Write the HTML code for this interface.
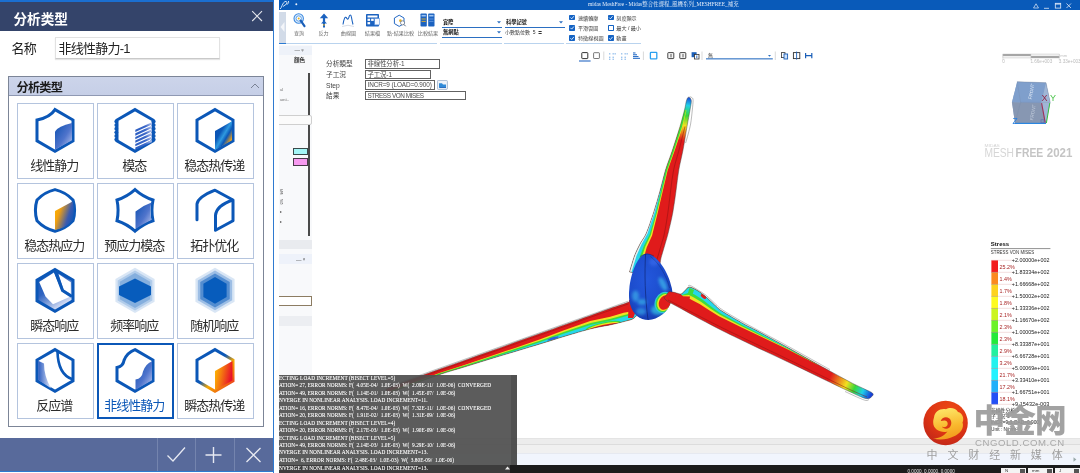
<!DOCTYPE html>
<html lang="zh"><head><meta charset="utf-8"><title>分析类型</title>
<style>
*{box-sizing:border-box;margin:0;padding:0}
html,body{width:1080px;height:473px;overflow:hidden;background:#fff}
body{position:relative;opacity:.9999;font-family:"Liberation Sans","Noto Sans CJK SC",sans-serif;color:#333}
.abs{position:absolute}
/* ---------- left dialog ---------- */
#dlg{position:absolute;left:0;top:0;width:274px;height:473px;background:#fff;border-right:1.5px solid #2f7ad0}
#dlg .top{position:absolute;left:0;top:0;width:274px;height:2px;background:#1b6fd0}
#dlg .title{position:absolute;left:0;top:1.5px;width:272.5px;height:29px;background:#34446a;color:#fff;font-weight:bold;font-size:13.6px;line-height:35px;padding-left:13.5px;letter-spacing:0}
#dlg .name{position:absolute;left:11.5px;top:39.5px;font-size:13px;line-height:17px;color:#222;letter-spacing:-.8px}
#dlg .inp{position:absolute;left:55px;top:37px;width:165px;height:22px;border:1px solid #e2e2e2;border-bottom-color:#c9c9c9;box-shadow:0 1px 1px rgba(0,0,0,.10);font-size:13px;line-height:22px;padding-left:2.5px;color:#222;background:#fff;letter-spacing:-.75px}
#grp{position:absolute;left:8px;top:76px;width:256px;height:351px;border:1px solid #7c8597;background:#fff}
#grp .hd{position:absolute;left:0;top:0;width:254px;height:18.6px;background:linear-gradient(#ccd4ea,#c6cfe7);border-bottom:1px solid #8f99b3;font-size:12.2px;font-weight:bold;line-height:22px;padding-left:7.5px;color:#1a1a1a;letter-spacing:-.8px}
.tile{position:absolute;width:77px;height:76px;border:1px solid #b4c4de;background:#fff;text-align:center}
.tile svg{position:absolute;left:-1px;top:-1px;display:block}
.tile span{position:absolute;left:-7.5px;right:-6px;top:52.5px;font-size:13px;line-height:18px;color:#2c2c2c;white-space:nowrap;letter-spacing:-1px;text-indent:-1px}
.tile.sel{border:2px solid #0b57b7}
.tile.sel svg{left:-2px;top:-2px}
.tile.sel span{color:#0b57b7;top:51.5px;left:-8.5px;right:-7px}
#foot{position:absolute;left:0;top:438px;width:272.5px;height:33px;background:#586a9b}
#foot i{position:absolute;top:0;width:1px;height:33px;background:#7484ae}
#dlg .bot{position:absolute;left:0;top:470.5px;width:274px;height:1.5px;background:#2f7ad0}
/* ---------- app ---------- */
#app{position:absolute;left:279px;top:0;width:801px;height:473px;background:#fff;overflow:hidden}
#tb{position:absolute;left:0;top:0;width:801px;height:10.1px;background:#095ab9}
.t5{font-size:5px;line-height:6px;white-space:nowrap}
.rl{position:absolute;top:29.5px;font-size:5.1px;line-height:6px;color:#6a6a6a;white-space:nowrap;transform:translateX(-50%);font-family:"Liberation Sans","Noto Sans CJK TC",sans-serif}
.seg{position:absolute;top:43px;height:1.3px;background:#b9d3ee}
.dd{position:absolute;height:1.2px;background:#2b6fc2}
.ck{position:absolute;width:5.6px;height:5.6px;background:#1463c4;border-radius:.8px}
.ck.off{background:#fff;border:1px solid #1463c4}
.ckl{position:absolute;font-size:5.1px;line-height:6px;color:#3a3a3a;white-space:nowrap;font-family:"Liberation Sans","Noto Sans CJK TC",sans-serif}
.fl{position:absolute;left:47px;font-size:6.7px;line-height:9px;color:#444;white-space:nowrap;font-family:"Liberation Sans","Noto Sans CJK TC",sans-serif}
.fb{position:absolute;left:86px;height:9.5px;border:1px solid #626262;font-size:6.4px;line-height:7.6px;padding-left:1.5px;color:#4a4a4a;white-space:nowrap;font-family:"Liberation Sans","Noto Sans CJK TC",sans-serif;letter-spacing:-.1px}
#side{position:absolute;left:0;top:44.5px;width:33px;height:331px;background:#f8f9fb}
#log{position:absolute;left:0;top:375px;width:238px;height:89.5px;background:rgba(80,80,80,.93);overflow:hidden}
#log div,.logl{font-family:"Liberation Serif","Noto Serif CJK SC",serif;font-size:5.3px;line-height:7.45px;color:#fff;white-space:nowrap;letter-spacing:.05px;text-shadow:0 0 .4px rgba(255,255,255,.45)}
.lg{position:absolute;font-size:4.6px;line-height:6px;white-space:nowrap;color:#222}
.lp{position:absolute;font-size:5px;line-height:6px;white-space:nowrap;color:#a02020}
</style></head>
<body>

<svg width="0" height="0" style="position:absolute"><defs>
<linearGradient id="gb" x1="0" y1="0" x2="1" y2="1"><stop offset="0" stop-color="#0b4fb0"/><stop offset=".55" stop-color="#4f74cc"/><stop offset="1" stop-color="#c4cdf0"/></linearGradient>
<linearGradient id="gb2" x1="0" y1="1" x2="1" y2="0"><stop offset="0" stop-color="#2a5cc0"/><stop offset=".6" stop-color="#3a66c8"/><stop offset="1" stop-color="#cfd6f4"/></linearGradient>
<linearGradient id="gheat" x1="0" y1="0" x2="1" y2="1"><stop offset="0" stop-color="#0b4fb0"/><stop offset=".35" stop-color="#0b57b7"/><stop offset=".5" stop-color="#2f9ae0"/><stop offset=".62" stop-color="#0b57b7"/><stop offset=".8" stop-color="#e8a020"/><stop offset="1" stop-color="#ffc000"/></linearGradient>
<linearGradient id="gorange" x1="0" y1="0.2" x2="1" y2="0.7"><stop offset="0" stop-color="#ffb400"/><stop offset=".25" stop-color="#f0a010"/><stop offset=".7" stop-color="#3a5ab0"/><stop offset="1" stop-color="#0b57b7"/></linearGradient>
<linearGradient id="gshade" x1="0" y1="0" x2="0.6" y2="1"><stop offset="0" stop-color="#0b57b7"/><stop offset=".5" stop-color="#2f63c0"/><stop offset="1" stop-color="#e6eafa"/></linearGradient>
<linearGradient id="gshade2" x1="0" y1="0" x2="1" y2="0"><stop offset="0" stop-color="#2a5cc0"/><stop offset="1" stop-color="#dfe5f8"/></linearGradient>
<linearGradient id="ghot" x1="0" y1="0" x2="1" y2="0.3"><stop offset="0" stop-color="#ffc400"/><stop offset=".45" stop-color="#f47a10"/><stop offset="1" stop-color="#e8102a"/></linearGradient>
<linearGradient id="ghs" gradientUnits="userSpaceOnUse" x1="20" y1="10" x2="58" y2="46"><stop offset="0" stop-color="#0b57b7"/><stop offset=".42" stop-color="#0b57b7"/><stop offset=".6" stop-color="#f5a800"/><stop offset=".8" stop-color="#f07010"/><stop offset="1" stop-color="#e8102a"/></linearGradient>
</defs></svg>


<div id="dlg">
 <div class="top"></div>
 <div class="title">分析类型</div>
 <svg class="abs" style="left:250px;top:9px" width="14" height="14" viewBox="0 0 14 14"><path d="M2.2,2.2L12,12M12,2.2L2.2,12" stroke="#e4e6ec" stroke-width="1.1" fill="none"/></svg>
 <div class="name">名称</div>
 <div class="inp">非线性静力-1</div>
 <div id="grp"><div class="hd">分析类型</div>
  <svg class="abs" style="left:241px;top:5px" width="10" height="8" viewBox="0 0 10 8"><path d="M1,6L5,2L9,6" stroke="#7a8294" stroke-width="1" fill="none"/></svg>
 </div>
 <div class="tile" style="left:17px;top:103px"><svg width="77" height="52" viewBox="0 0 77 52"><path d="M38.00,6.60 Q33.00,14.40 19.99,17.00 L19.99,37.80 L38.00,48.20 L56.01,37.80 L56.01,17.00 Z" fill="#fff" stroke="#0b57b7" stroke-width="3.0" stroke-linejoin="miter"/><path d="M38.00,46.70 L38.00,28.40 Q41.00,23.40 55.01,20.00 L55.01,37.30 Z" fill="url(#gb)"/></svg><span>线性静力</span></div>
<div class="tile" style="left:97px;top:103px"><svg width="77" height="52" viewBox="0 0 77 52"><polygon points="38.00,6.60 56.01,17.00 56.01,37.80 38.00,48.20 19.99,37.80 19.99,17.00" fill="#fff" stroke="#0b57b7" stroke-width="3.0"/><circle cx="19.29" cy="18.50" r="1.9" fill="#0b57b7"/><circle cx="19.29" cy="22.10" r="1.9" fill="#0b57b7"/><circle cx="19.29" cy="25.70" r="1.9" fill="#0b57b7"/><circle cx="19.29" cy="29.30" r="1.9" fill="#0b57b7"/><circle cx="19.29" cy="32.90" r="1.9" fill="#0b57b7"/><circle cx="19.29" cy="36.50" r="1.9" fill="#0b57b7"/><circle cx="56.71" cy="18.50" r="1.9" fill="#0b57b7"/><circle cx="56.71" cy="22.10" r="1.9" fill="#0b57b7"/><circle cx="56.71" cy="25.70" r="1.9" fill="#0b57b7"/><circle cx="56.71" cy="29.30" r="1.9" fill="#0b57b7"/><circle cx="56.71" cy="32.90" r="1.9" fill="#0b57b7"/><circle cx="56.71" cy="36.50" r="1.9" fill="#0b57b7"/><polygon points="38.30,26.80 54.81,19.20 54.81,21.50 38.30,29.10" fill="url(#gb2)"/><polygon points="38.30,30.35 54.81,22.75 54.81,25.05 38.30,32.65" fill="url(#gb2)"/><polygon points="38.30,33.90 54.81,26.30 54.81,28.60 38.30,36.20" fill="url(#gb2)"/><polygon points="38.30,37.45 54.81,29.85 54.81,32.15 38.30,39.75" fill="url(#gb2)"/><polygon points="38.30,41.00 54.81,33.40 54.81,35.70 38.30,43.30" fill="url(#gb2)"/><polygon points="38.30,44.55 54.81,36.95 54.81,39.25 38.30,46.85" fill="url(#gb2)"/></svg><span>模态</span></div>
<div class="tile" style="left:177px;top:103px"><svg width="77" height="52" viewBox="0 0 77 52"><polygon points="38.00,6.60 56.01,17.00 56.01,37.80 38.00,48.20 19.99,37.80 19.99,17.00" fill="#fff" stroke="#0b57b7" stroke-width="3.0"/><polygon points="38.00,27.90 55.01,18.20 55.01,37.20 38.00,46.90" fill="url(#gheat)"/></svg><span>稳态热传递</span></div>
<div class="tile" style="left:17px;top:183px"><svg width="77" height="52" viewBox="0 0 77 52"><path d="M38.00,6.60 Q48.61,9.03 56.01,17.00 Q59.21,27.40 56.01,37.80 Q48.61,45.77 38.00,48.20 Q27.39,45.77 19.99,37.80 Q16.79,27.40 19.99,17.00 Q27.39,9.03 38.00,6.60 Z" fill="#fff" stroke="#0b57b7" stroke-width="3.0" stroke-linejoin="round"/><path d="M38.00,27.90 L55.51,18.50 Q58.01,27.40 55.51,37.30 Q48.00,45.70 38.00,46.90 Z" fill="url(#gorange)"/></svg><span>稳态热应力</span></div>
<div class="tile" style="left:97px;top:183px"><svg width="77" height="52" viewBox="0 0 77 52"><path d="M38.00,6.60 Q45.91,13.71 56.01,17.00 Q53.81,27.40 56.01,37.80 Q45.91,41.09 38.00,48.20 Q30.09,41.09 19.99,37.80 Q22.19,27.40 19.99,17.00 Q30.09,13.71 38.00,6.60 Z" fill="#fff" stroke="#0b57b7" stroke-width="3.0" stroke-linejoin="miter"/><path d="M38.50,28.40 Q46.00,22.40 54.51,19.50 Q52.01,27.40 54.51,36.80 Q46.00,41.20 38.50,45.70 Z" fill="url(#gb)"/></svg><span>预应力模态</span></div>
<div class="tile" style="left:177px;top:183px"><svg width="77" height="52" viewBox="0 0 77 52"><path d="M19.99,36.80 L19.99,21.00 Q20.99,14.00 38.00,7.20 L56.01,17.00 L56.01,37.80 L38.50,47.20" fill="none" stroke="#0b57b7" stroke-width="3.0" stroke-linejoin="round" stroke-linecap="round"/><path d="M38.50,47.70 L38.50,32.40 Q39.50,22.40 56.01,17.00" fill="none" stroke="#0b57b7" stroke-width="3.0" stroke-linecap="butt"/></svg><span>拓扑优化</span></div>
<div class="tile" style="left:17px;top:263px"><svg width="77" height="52" viewBox="0 0 77 52"><polygon points="38.00,6.60 56.01,17.00 56.01,37.80 38.00,48.20 19.99,37.80 19.99,17.00" fill="url(#gshade)" stroke="#0b57b7" stroke-width="3.0"/><polygon points="37.00,9.60 45.00,28.40 52.51,33.90 36.00,41.20 28.50,33.40 22.19,19.00" fill="#fff"/><polygon points="41.50,11.10 53.81,19.20 53.81,30.90 46.50,26.40" fill="#fff"/><path d="M38.00,7.60 L45.50,27.40 L55.01,33.40" fill="none" stroke="#0b57b7" stroke-width="3.0"/></svg><span>瞬态响应</span></div>
<div class="tile" style="left:97px;top:263px"><svg width="77" height="52" viewBox="0 0 77 52"><polygon points="38.00,4.80 57.57,16.10 57.57,38.70 38.00,50.00 18.43,38.70 18.43,16.10" fill="#1565c0" opacity="0.16"/><polygon points="38.00,7.40 55.32,17.40 55.32,37.40 38.00,47.40 20.68,37.40 20.68,17.40" fill="#1565c0" opacity="0.2"/><polygon points="38.00,9.90 53.16,18.65 53.16,36.15 38.00,44.90 22.84,36.15 22.84,18.65" fill="#1565c0" opacity="0.28"/><polygon points="38.00,15.40 54.00,23.40 54.00,31.90 38.00,39.90 22.00,31.90 22.00,23.40" fill="#075cbc"/></svg><span>频率响应</span></div>
<div class="tile" style="left:177px;top:263px"><svg width="77" height="52" viewBox="0 0 77 52"><polygon points="38.00,4.80 57.57,16.10 57.57,38.70 38.00,50.00 18.43,38.70 18.43,16.10" fill="#1565c0" opacity="0.16"/><polygon points="38.00,7.60 55.15,17.50 55.15,37.30 38.00,47.20 20.85,37.30 20.85,17.50" fill="#1565c0" opacity="0.3"/><polygon points="38.00,10.40 52.72,18.90 52.72,35.90 38.00,44.40 23.28,35.90 23.28,18.90" fill="#1565c0" opacity="0.55"/><polygon points="38.00,14.00 49.60,20.70 49.60,34.10 38.00,40.80 26.40,34.10 26.40,20.70" fill="#075cbc"/></svg><span>随机响应</span></div>
<div class="tile" style="left:17px;top:343px"><svg width="77" height="52" viewBox="0 0 77 52"><polygon points="38.00,6.60 56.01,17.00 56.01,37.80 38.00,48.20 19.99,37.80 19.99,17.00" fill="#fff" stroke="#0b57b7" stroke-width="3.0"/><path d="M21.19,17.80 L27.00,20.50 Q27.00,33.40 34.00,45.20 L21.19,37.00 L21.19,18.00 Z" fill="url(#gshade2)"/><path d="M40.50,8.60 Q41.00,31.40 55.51,36.30" fill="none" stroke="#0b57b7" stroke-width="2.6"/></svg><span>反应谱</span></div>
<div class="tile sel" style="left:97px;top:343px"><svg width="77" height="52" viewBox="0 0 77 52"><path d="M38.00,6.60 L56.01,17.00 L56.01,37.80 L38.00,48.20 L19.99,37.80 L19.99,24.40 Q25.99,23.40 27.00,17.40 Q30.00,9.60 38.00,6.60 Z" fill="#fff" stroke="#0b57b7" stroke-width="3.0" stroke-linejoin="miter"/><path d="M38.50,46.70 L38.50,36.40 Q45.00,35.40 46.00,28.40 Q49.00,20.40 55.01,18.50 L55.01,37.20 Z" fill="url(#gb)"/></svg><span>非线性静力</span></div>
<div class="tile" style="left:177px;top:343px"><svg width="77" height="52" viewBox="0 0 77 52"><polygon points="38.00,6.60 56.01,17.00 56.01,37.80 38.00,48.20 19.99,37.80 19.99,17.00" fill="#fff" stroke="url(#ghs)" stroke-width="3.0"/><polygon points="38.00,27.90 55.51,18.00 55.51,37.40 38.00,47.20" fill="url(#ghot)"/></svg><span>瞬态热传递</span></div>

 <div id="foot"><i style="left:157px"></i><i style="left:195px"></i><i style="left:233.5px"></i>
  <svg class="abs" style="left:157px;top:0" width="116" height="33" viewBox="0 0 116 33">
   <path d="M10.5,17.5L16,23L28,9.5" stroke="#e6e9f2" stroke-width="1.3" fill="none"/>
   <path d="M48.5,17H64.5M56.5,9V25" stroke="#e6e9f2" stroke-width="1.4" fill="none"/>
   <path d="M89.5,10L103.5,24M103.5,10L89.5,24" stroke="#e6e9f2" stroke-width="1.3" fill="none"/>
  </svg>
 </div>
 <div class="bot"></div>
</div>

<div id="app">
<div class="abs" style="left:0;top:438px;width:801px;height:7px;background:#ececec;border-top:1px solid #e4e4e4;border-bottom:1px solid #dcdcdc"></div>
<div class="abs" style="left:0;top:445px;width:801px;height:8px;background:#f0f0f0"></div>
<div class="abs" style="left:0;top:453px;width:801px;height:11.5px;background:#f1f5fd;border-top:1px solid #e6e9f0"></div>
<div id="tb"></div>
<svg class="abs" style="left:0;top:0" width="30" height="11" viewBox="0 0 30 11"><path d="M1,9C3,8 3,3 6,1.5M4,6.5L7.5,4M6,1.5C8,1 8.5,2.5 7.5,4C9,4.5 10,3 9.5,1" stroke="#cfe0f5" stroke-width="1" fill="none"/><circle cx="17.3" cy="4.2" r="1" fill="#e8f0fb"/></svg>
<div class="abs t5" style="left:309px;top:1.2px;color:#e8effa;font-family:&quot;Liberation Serif&quot;,&quot;Noto Serif CJK SC&quot;,serif;font-size:5.45px">midas MeshFree - Midas整合性課程_風機系列_MESHFREE_補充</div>
<svg class="abs" style="left:752px;top:1px" width="46" height="9" viewBox="0 0 46 9"><path d="M2.5,7L5,2.8L7.5,7Z" stroke="#dfe9f8" stroke-width=".7" fill="none"/><path d="M13,7.3H18" stroke="#dfe9f8" stroke-width=".8"/><rect x="24.3" y="2.3" width="5.4" height="4.8" stroke="#dfe9f8" stroke-width=".8" fill="none"/><path d="M24.3,3H29.7" stroke="#dfe9f8" stroke-width="1"/><path d="M35.5,2.5L40,7M40,2.5L35.5,7" stroke="#dfe9f8" stroke-width=".8"/></svg>
<div class="abs" style="left:0;top:12px;width:6.5px;height:31px;background:#d2dbe8"></div>
<svg class="abs" style="left:0;top:21px" width="7" height="12" viewBox="0 0 7 12"><path d="M5.5,1L1.5,6L5.5,11Z" fill="#f4f6fa"/></svg>
<div class="abs" style="left:0;top:42.8px;width:6.5px;height:1.7px;background:#2b7ad2"></div>
<div class="seg" style="left:6.5px;width:151.5px"></div>
<div class="seg" style="left:161.0px;width:62.0px"></div>
<div class="seg" style="left:224.5px;width:60.0px"></div>
<div class="seg" style="left:287.0px;width:74.5px"></div>
<svg class="abs" style="left:0;top:0" width="180" height="44" viewBox="0 0 180 44"><g transform="translate(20.5,20.5)"><circle cx="-.8" cy="-2" r="4.7" fill="#e4f0fc" stroke="#3d8ae0" stroke-width="1.1"/><circle cx="-.8" cy="-2" r="2.7" fill="#fff" stroke="#5a9ee8" stroke-width="1"/><circle cx="-.8" cy="-2" r="1" fill="#e6b020"/><path d="M1.2,.2L5,5.6" stroke="#1b5fb8" stroke-width="2.2" stroke-linecap="round"/></g><g transform="translate(45.0,20.5)"><path d="M0,-7L4.2,-2.2H1.1V2H-1.1V-2.2H-4.2Z" fill="#1b62c0"/><path d="M0,0L3,3H1V7H-1V3H-3Z" fill="#1b62c0"/><circle cx="0" cy="4.4" r=".8" fill="#e6b020"/></g><g transform="translate(69.0,20.5)"><path d="M-5,4C-4,-2 -3,-4 -1.8,-3C-.8,-2 -.5,.5 .8,-3C1.8,-6.5 3,-6 3.5,-3C4,0 4.5,2 5,4" stroke="#1b62c0" stroke-width="1.1" fill="none"/><path d="M-6,6Q0,3.5 6,6" stroke="#d8dde6" stroke-width="1" fill="none"/></g><g transform="translate(93.5,20.5)"><rect x="-6.5" y="-6.5" width="13" height="12.5" rx=".8" fill="#1b62c0"/><rect x="-5" y="-5" width="10" height="2" fill="#fff"/><rect x="-5" y="-1.8" width="2.6" height="2.2" fill="#fff"/><rect x="-1.4" y="-1.8" width="2.6" height="2.2" fill="#fff"/><rect x="-5" y="1.6" width="2.6" height="2.2" fill="#fff"/><rect x="2.2" y="-2" width="4.6" height="6.4" fill="#f4f8ff" stroke="#5a92dc" stroke-width=".6"/></g><g transform="translate(121.0,20.8) scale(.8)"><path d="M-1,-7L5,-3.5V3.5L-1,7L-7,3.5V-3.5Z" fill="#fff" stroke="#1b62c0" stroke-width="1.2"/><circle cx=".5" cy="-.2" r="1.6" fill="#e6b020"/><circle cx="3.2" cy="2.6" r="2.6" fill="#fff" stroke="#4a5a70" stroke-width=".8"/><path d="M5,4.6L7,6.8" stroke="#4a5a70" stroke-width="1.1"/></g><g transform="translate(148.5,20.5)"><rect x="-7" y="-7" width="6.3" height="13" rx=".8" fill="#1b62c0"/><rect x=".7" y="-7" width="6.3" height="13" rx=".8" fill="#1b62c0"/><rect x="-6" y="-5.6" width="4.3" height="1.6" fill="#9cc2f0"/><rect x="1.7" y="-5.6" width="4.3" height="1.6" fill="#9cc2f0"/><rect x="-6" y="-2" width="4.3" height="1" fill="#d0a83a"/><rect x="-6" y=".4" width="4.3" height="1" fill="#d0a83a"/><rect x="1.7" y="-2" width="4.3" height="1" fill="#5a92dc"/><rect x="1.7" y=".4" width="4.3" height="1" fill="#5a92dc"/></g></svg>
<div class="rl" style="left:20.0px">查詢</div>
<div class="rl" style="left:44.5px">反力</div>
<div class="rl" style="left:69.5px">曲線圖</div>
<div class="rl" style="left:93.5px">結果檔</div>
<div class="rl" style="left:121.5px">點-結果比較</div>
<div class="rl" style="left:149.0px">比較結果</div>
<div class="abs t5" style="left:164.0px;top:19.0px;color:#111;font-weight:bold;font-family:&quot;Liberation Sans&quot;,&quot;Noto Sans CJK TC&quot;,sans-serif;font-size:5.2px">實際</div><div class="dd" style="left:163.0px;top:27.2px;width:60.0px"></div><svg class="abs" style="left:217.5px;top:21.0px" width="4" height="3" viewBox="0 0 4 3"><path d="M0,.3H4L2,2.6Z" fill="#2b6fc2"/></svg>
<div class="abs t5" style="left:164.0px;top:29.2px;color:#111;font-weight:bold;font-family:&quot;Liberation Sans&quot;,&quot;Noto Sans CJK TC&quot;,sans-serif;font-size:5.2px">無網點</div><div class="dd" style="left:163.0px;top:36.6px;width:60.0px"></div><svg class="abs" style="left:217.5px;top:31.2px" width="4" height="3" viewBox="0 0 4 3"><path d="M0,.3H4L2,2.6Z" fill="#2b6fc2"/></svg>
<div class="abs t5" style="left:227.0px;top:19.0px;color:#111;font-weight:bold;font-family:&quot;Liberation Sans&quot;,&quot;Noto Sans CJK TC&quot;,sans-serif;font-size:5.2px">科學記號</div><div class="dd" style="left:226.0px;top:27.2px;width:59.5px"></div><svg class="abs" style="left:280.0px;top:21.0px" width="4" height="3" viewBox="0 0 4 3"><path d="M0,.3H4L2,2.6Z" fill="#2b6fc2"/></svg>
<div class="abs t5" style="left:226.0px;top:29.4px;color:#333;font-family:&quot;Liberation Sans&quot;,&quot;Noto Sans CJK TC&quot;,sans-serif;font-size:5px">小數點位數&nbsp; 5 &nbsp;≑</div>
<div class="ck" style="left:290.3px;top:14.7px"></div><div class="ckl" style="left:299.0px;top:14.5px">連續輪廓</div>
<div class="ck" style="left:290.3px;top:25.0px"></div><div class="ckl" style="left:299.0px;top:24.8px">平滑雲圖</div>
<div class="ck" style="left:290.3px;top:35.4px"></div><div class="ckl" style="left:299.0px;top:35.2px">特徵線視圖</div>
<div class="ck" style="left:329.0px;top:14.7px"></div><div class="ckl" style="left:337.3px;top:14.5px">刻度顯示</div>
<div class="ck off" style="left:329.0px;top:25.0px"></div><div class="ckl" style="left:337.3px;top:24.8px">最大 / 最小</div>
<div class="ck" style="left:329.0px;top:35.4px"></div><div class="ckl" style="left:337.3px;top:35.2px">動畫</div>
<svg class="abs" style="left:0;top:0;pointer-events:none" width="400" height="44" viewBox="0 0 400 44"><path d="M291.4,17.5l1.3,1.3l2.2,-2.6" stroke="#fff" stroke-width=".8" fill="none"/><path d="M291.4,27.8l1.3,1.3l2.2,-2.6" stroke="#fff" stroke-width=".8" fill="none"/><path d="M291.4,38.2l1.3,1.3l2.2,-2.6" stroke="#fff" stroke-width=".8" fill="none"/><path d="M330.1,17.5l1.3,1.3l2.2,-2.6" stroke="#fff" stroke-width=".8" fill="none"/><path d="M330.1,38.2l1.3,1.3l2.2,-2.6" stroke="#fff" stroke-width=".8" fill="none"/></svg>
<svg class="abs" style="left:0;top:0" width="801" height="70" viewBox="0 0 801 70"><rect x="302.8" y="52.6" width="6.0" height="6.0" fill="#fff" stroke="#333" stroke-width="1" rx=".6"/><rect x="300.0" y="60.4" width="11.6" height="1.2" fill="#3a76c8"/><rect x="314.6" y="52.7" width="5.8" height="5.8" fill="#fff" stroke="#555" stroke-width="0.8" rx=".6"/><path d="M324.8,51.5V60" stroke="#c8c8c8" stroke-width=".7"/><rect x="330.0" y="53.1" width="1.4" height="1.4" fill="#9cc4ee"/><rect x="333.5" y="53.1" width="1.4" height="1.4" fill="#9cc4ee"/><rect x="335.5" y="53.1" width="1.4" height="1.4" fill="#9cc4ee"/><rect x="330.0" y="56.6" width="1.4" height="1.4" fill="#9cc4ee"/><rect x="333.5" y="56.6" width="1.4" height="1.4" fill="#9cc4ee"/><rect x="333.5" y="58.6" width="1.4" height="1.4" fill="#9cc4ee"/><rect x="330.0" y="58.6" width="1.4" height="1.4" fill="#9cc4ee"/><rect x="342.0" y="53.1" width="1.4" height="1.4" fill="#9cc4ee"/><rect x="345.5" y="53.1" width="1.4" height="1.4" fill="#9cc4ee"/><rect x="347.5" y="53.1" width="1.4" height="1.4" fill="#9cc4ee"/><rect x="342.0" y="56.6" width="1.4" height="1.4" fill="#9cc4ee"/><rect x="345.5" y="56.6" width="1.4" height="1.4" fill="#9cc4ee"/><rect x="345.5" y="58.6" width="1.4" height="1.4" fill="#9cc4ee"/><rect x="342.0" y="58.6" width="1.4" height="1.4" fill="#9cc4ee"/><rect x="354.0" y="52.4" width="2.5" height="1.1" fill="#2f72c8"/><rect x="354.0" y="54.2" width="4.0" height="1.1" fill="#2f72c8"/><rect x="354.0" y="56.0" width="5.5" height="1.1" fill="#2f72c8"/><rect x="354.0" y="57.8" width="7.0" height="1.1" fill="#2f72c8"/><path d="M364.4,51.5V60" stroke="#c8c8c8" stroke-width=".7"/><rect x="371.4" y="52.4" width="6.4" height="6.4" fill="#fff" stroke="#2aa0f0" stroke-width="1.3" rx=".6"/><rect x="388.8" y="52.6" width="6.0" height="6.0" fill="#f4f4f4" stroke="#333" stroke-width="0.9" rx=".6"/><path d="M392.0,54v3.4" stroke="#333" stroke-width=".8"/><rect x="400.8" y="52.6" width="6.0" height="6.0" fill="#f4f4f4" stroke="#333" stroke-width="0.9" rx=".6"/><path d="M404.0,54v3.4" stroke="#333" stroke-width=".8"/><rect x="412.6" y="52.2" width="5" height="5" fill="#1b5fb8"/><rect x="415.4" y="54.4" width="4.6" height="4.6" fill="#fff" stroke="#333" stroke-width=".8"/><path d="M417.8,55.5v2.6" stroke="#1b5fb8" stroke-width=".9"/><path d="M423.0,51.5V60" stroke="#c8c8c8" stroke-width=".7"/><rect x="427.0" y="58.3" width="66.8" height="1.1" fill="#2b6fc2"/><path d="M489.0,55h3l-1.5,1.8Z" fill="#2b6fc2"/><path d="M496.3,51.5V60" stroke="#c8c8c8" stroke-width=".7"/><rect x="502.4" y="52.6" width="3.6" height="5" fill="#fff" stroke="#333" stroke-width=".8"/><rect x="505.0" y="54" width="3.6" height="5" fill="#cfe2fa" stroke="#1b5fb8" stroke-width=".9"/><rect x="514.4" y="52.6" width="6.4" height="6" fill="#fff" stroke="#333" stroke-width=".9"/><path d="M517.6,51.6v8" stroke="#1b5fb8" stroke-width=".9"/><path d="M526.4,55.6h6.4M526.6,53v5.2M532.8,53v5.2" stroke="#1b5fb8" stroke-width="1.2"/></svg>
<div class="abs t5" style="left:429.0px;top:52.3px;color:#333;font-family:&quot;Liberation Sans&quot;,&quot;Noto Sans CJK TC&quot;,sans-serif;font-size:5px">無</div>
<div class="fl" style="top:59.2px">分析類型</div>
<div class="fl" style="top:70.2px">子工況</div>
<div class="fl" style="top:80.5px">Step</div>
<div class="fl" style="top:91.2px">結果</div>
<div class="fb" style="top:59.0px;width:74.5px">非線性分析-1</div>
<div class="fb" style="top:69.6px;width:65.5px">子工況-1</div>
<div class="fb" style="top:80.2px;width:70.0px">INCR=9 (LOAD=0.900)</div>
<div class="fb" style="top:90.8px;width:101.0px"><span style="letter-spacing:-.42px">STRESS VON MISES</span></div>
<svg class="abs" style="left:158.0px;top:80px" width="11" height="10" viewBox="0 0 11 10"><rect x=".4" y=".4" width="10" height="9" rx="1" fill="#eef3fa" stroke="#8aa0c0" stroke-width=".7"/><path d="M2,3.2h3l1,1.2h3v3.4h-7z" fill="#2f8ad8"/><path d="M2.5,7.5h6.5" stroke="#1b5fb8" stroke-width=".8"/></svg>
<div id="side"><div class="abs" style="left:0;top:1.5px;width:33px;height:8.5px;background:#eef2f9"></div><div class="abs t5" style="left:15.5px;top:2.7px;color:#555;font-size:5.5px">— <span style="font-size:4.6px;position:relative;top:-.6px">ᵠ</span></div><div class="abs t5" style="left:15px;top:12.7px;color:#333;font-weight:bold;font-size:5.6px;font-family:&quot;Liberation Sans&quot;,&quot;Noto Sans CJK TC&quot;,sans-serif">顏色</div><div class="abs" style="left:29.2px;top:28.5px;width:1.5px;height:163px;background:#4a4a4a"></div><div class="abs t5" style="left:1px;top:42.0px;color:#777;font-size:4.6px;font-family:&quot;Liberation Serif&quot;,serif">al</div><div class="abs t5" style="left:1px;top:52.8px;color:#777;font-size:4.6px;font-family:&quot;Liberation Serif&quot;,serif">ami..</div><div class="abs" style="left:-3px;top:70.5px;width:35.5px;height:10px;border:1px solid #cfcfcf;border-radius:0 2px 2px 0;background:#fbfbfb"></div><div class="abs" style="left:14.3px;top:103.5px;width:15px;height:7.4px;background:#a4f6f6;border:1px solid #3a4a4a"></div><div class="abs" style="left:14.3px;top:113.9px;width:15px;height:7.4px;background:#f79af0;border:1px solid #4a3a4a"></div><div class="abs t5" style="left:1px;top:144.5px;color:#555;font-size:4.4px;width:3px;overflow:hidden;font-family:&quot;Liberation Sans&quot;,&quot;Noto Sans CJK TC&quot;,sans-serif">變</div><div class="abs t5" style="left:1px;top:154.5px;color:#555;font-size:4.4px;width:3px;overflow:hidden;font-family:&quot;Liberation Sans&quot;,&quot;Noto Sans CJK TC&quot;,sans-serif">度</div><div class="abs t5" style="left:1px;top:164.5px;color:#555;font-size:4.4px;width:3px;overflow:hidden;font-family:&quot;Liberation Sans&quot;,&quot;Noto Sans CJK TC&quot;,sans-serif">▸</div><div class="abs t5" style="left:1px;top:174.5px;color:#555;font-size:4.4px;width:3px;overflow:hidden;font-family:&quot;Liberation Sans&quot;,&quot;Noto Sans CJK TC&quot;,sans-serif">▸</div><div class="abs" style="left:0;top:195.0px;width:33px;height:9.5px;background:#e9ebef"></div><div class="abs" style="left:0;top:209.9px;width:33px;height:10px;background:#eef2fa"></div><div class="abs t5" style="left:17px;top:212.0px;color:#555;font-size:5.5px">— <span style="font-size:4.6px;position:relative;top:-.6px">ᵠ</span></div><div class="abs" style="left:-3px;top:251.1px;width:36px;height:10px;border:1px solid #8c7c62;background:#fff"></div><div class="abs" style="left:0;top:271.5px;width:33px;height:10px;background:#eceef2"></div></div>
<svg class="abs" style="left:0;top:0" width="801" height="473" viewBox="279 0 801 473"><defs><filter id="bl" x="-5%" y="-5%" width="110%" height="110%"><feGaussianBlur stdDeviation=".75"/></filter><filter id="bl2" x="-20%" y="-20%" width="140%" height="140%"><feGaussianBlur stdDeviation="1.6"/></filter><linearGradient id="gTop" gradientUnits="userSpaceOnUse" x1="650" y1="262" x2="689" y2="97"><stop offset="0" stop-color="#e01b1b"/><stop offset="0.74" stop-color="#e01b1b"/><stop offset="0.83" stop-color="#f2e020"/><stop offset="0.89" stop-color="#38d838"/><stop offset="0.95" stop-color="#20d0e8"/><stop offset="1" stop-color="#1840d8"/></linearGradient><linearGradient id="gRight" gradientUnits="userSpaceOnUse" x1="670" y1="296" x2="871" y2="395"><stop offset="0" stop-color="#e01b1b"/><stop offset="0.8" stop-color="#e01b1b"/><stop offset="0.88" stop-color="#f2e020"/><stop offset="0.92" stop-color="#38d838"/><stop offset="0.96" stop-color="#20d0e8"/><stop offset="1" stop-color="#1840d8"/></linearGradient><linearGradient id="gLeft" gradientUnits="userSpaceOnUse" x1="632" y1="308" x2="380" y2="396"><stop offset="0" stop-color="#e01b1b"/><stop offset="1" stop-color="#e01b1b"/></linearGradient><radialGradient id="gHub" cx=".42" cy=".4" r=".7"><stop offset="0" stop-color="#2357dc"/><stop offset=".6" stop-color="#1c4ccc"/><stop offset="1" stop-color="#1536a6"/></radialGradient><clipPath id="cTop"><path d="M629.5,272.0C629.9,270.8 630.7,267.8 631.6,265.0C632.5,262.2 633.4,258.5 634.8,255.0C636.2,251.5 638.1,247.7 640.0,244.0C641.9,240.3 644.1,238.3 646.4,233.0C648.7,227.7 651.5,219.0 653.8,212.0C656.1,205.0 658.0,198.0 660.0,191.0C662.0,184.0 663.4,176.8 665.5,170.0C667.6,163.2 670.1,157.2 672.5,150.0C674.9,142.8 678.0,133.2 680.0,126.5C682.0,119.8 683.4,114.3 684.5,110.0C685.6,105.7 685.8,102.6 686.5,100.5C687.2,98.4 687.8,97.2 688.6,97.2C689.4,97.2 691.1,98.4 691.3,100.5C691.5,102.6 690.7,105.7 690.0,110.0C689.3,114.3 688.2,119.8 687.0,126.5C685.8,133.2 684.4,142.8 683.0,150.0C681.6,157.2 680.0,163.2 678.8,170.0C677.6,176.8 677.0,184.0 676.0,191.0C675.0,198.0 674.2,205.0 672.9,212.0C671.6,219.0 669.6,227.3 668.2,233.0C666.8,238.7 665.7,241.8 664.5,246.0C663.3,250.2 661.9,254.7 661.0,258.0C660.1,261.3 660.8,263.2 659.0,266.0C657.2,268.8 651.5,273.5 650.0,275.0Z"/></clipPath><clipPath id="cRight"><path d="M669.0,291.5C670.0,291.7 673.0,292.1 675.0,292.5C677.0,292.9 679.3,294.3 681.0,294.0C682.7,293.7 683.6,291.7 685.0,290.5C686.4,289.3 687.3,287.0 689.3,287.0C691.3,287.0 694.3,288.7 697.0,290.3C699.7,291.9 702.8,294.2 705.7,296.6C708.6,299.0 711.9,302.5 714.6,304.9C717.4,307.3 717.3,308.0 722.2,311.2C727.1,314.4 738.3,320.8 743.8,323.9C749.3,327.0 748.0,325.9 755.2,329.8C762.4,333.7 776.3,341.2 786.8,347.0C797.3,352.8 807.5,358.7 818.0,364.5C828.5,370.3 842.3,377.9 850.0,382.0C857.7,386.1 860.2,386.9 864.0,388.8C867.8,390.7 871.3,391.9 872.6,393.2C873.9,394.5 872.9,395.6 871.8,396.5C870.7,397.4 869.6,399.4 866.0,398.6C862.4,397.8 858.0,395.5 850.0,391.8C842.0,388.1 828.5,381.6 818.0,376.5C807.5,371.4 797.5,366.5 787.0,361.5C776.5,356.5 765.7,351.6 755.0,346.5C744.3,341.4 732.2,335.6 723.0,331.0C713.8,326.4 707.2,322.8 700.0,319.0C692.8,315.2 685.3,310.9 680.0,308.0C674.7,305.1 670.7,303.2 668.0,301.5C665.3,299.8 664.7,298.6 664.0,298.0Z"/></clipPath><clipPath id="cLeft"><path d="M636.0,297.5C635.0,298.2 634.3,299.8 630.0,301.6C625.7,303.5 616.7,306.2 610.0,308.6C603.3,311.0 597.5,313.1 590.0,315.8C582.5,318.5 573.1,321.8 565.0,324.7C556.9,327.6 549.7,330.1 541.5,333.0C533.3,335.9 524.4,339.0 516.0,342.0C507.6,345.0 499.5,348.0 491.0,351.0C482.5,354.0 473.5,357.2 465.0,360.2C456.5,363.2 448.3,366.0 440.0,369.0C431.7,372.0 423.0,375.1 415.0,378.0C407.0,380.9 396.8,384.6 392.0,386.5C387.2,388.4 386.0,388.7 386.0,389.5C386.0,390.3 387.2,392.5 392.0,391.5C396.8,390.5 407.0,386.4 415.0,383.5C423.0,380.6 431.7,377.2 440.0,374.4C448.3,371.6 456.5,369.4 465.0,366.8C473.5,364.2 482.5,361.3 491.0,358.7C499.5,356.1 507.6,353.7 516.0,351.2C524.4,348.7 533.3,346.0 541.5,343.5C549.7,341.0 556.6,338.7 565.0,336.2C573.4,333.7 584.2,330.4 592.0,328.5C599.8,326.6 606.3,325.8 612.0,324.5C617.7,323.2 622.4,322.0 626.0,321.0C629.6,320.0 631.2,320.0 633.5,318.5C635.8,317.0 638.9,313.1 640.0,312.0Z"/></clipPath></defs><path d="M636.0,297.5C635.0,298.2 634.3,299.8 630.0,301.6C625.7,303.5 616.7,306.2 610.0,308.6C603.3,311.0 597.5,313.1 590.0,315.8C582.5,318.5 573.1,321.8 565.0,324.7C556.9,327.6 549.7,330.1 541.5,333.0C533.3,335.9 524.4,339.0 516.0,342.0C507.6,345.0 499.5,348.0 491.0,351.0C482.5,354.0 473.5,357.2 465.0,360.2C456.5,363.2 448.3,366.0 440.0,369.0C431.7,372.0 423.0,375.1 415.0,378.0C407.0,380.9 396.8,384.6 392.0,386.5C387.2,388.4 386.0,388.7 386.0,389.5C386.0,390.3 387.2,392.5 392.0,391.5C396.8,390.5 407.0,386.4 415.0,383.5C423.0,380.6 431.7,377.2 440.0,374.4C448.3,371.6 456.5,369.4 465.0,366.8C473.5,364.2 482.5,361.3 491.0,358.7C499.5,356.1 507.6,353.7 516.0,351.2C524.4,348.7 533.3,346.0 541.5,343.5C549.7,341.0 556.6,338.7 565.0,336.2C573.4,333.7 584.2,330.4 592.0,328.5C599.8,326.6 606.3,325.8 612.0,324.5C617.7,323.2 622.4,322.0 626.0,321.0C629.6,320.0 631.2,320.0 633.5,318.5C635.8,317.0 638.9,313.1 640.0,312.0Z" fill="url(#gLeft)"/><g clip-path="url(#cLeft)"><g filter="url(#bl)"><path d="M640.0,312.0L633.5,318.5L626.0,321.0L612.0,324.5L592.0,328.5L565.0,336.2L541.5,343.5L516.0,351.2L491.0,358.7L465.0,366.8L440.0,374.4L415.0,383.5L392.0,391.5L391.6,390.4L414.5,382.2L439.5,372.9L464.4,364.9L490.2,356.2L515.0,347.9L540.2,339.3L563.3,330.4L590.2,321.1L610.3,316.7L623.7,312.8L629.2,311.8L638.6,310.6Z" fill="#f0e222"/><path d="M640.0,312.0L633.5,318.5L626.0,321.0L612.0,324.5L592.0,328.5L565.0,336.2L541.5,343.5L516.0,351.2L491.0,358.7L465.0,366.8L440.0,374.4L415.0,383.5L392.0,391.5L391.7,390.7L414.7,382.5L439.6,373.3L464.6,365.4L490.4,356.9L515.3,348.8L540.5,340.4L563.7,331.9L590.6,323.0L610.7,318.7L624.3,314.9L630.3,313.5L639.0,311.0Z" fill="#3edc3c"/><path d="M640.0,312.0L633.5,318.5L626.0,321.0L612.0,324.5L592.0,328.5L565.0,336.2L541.5,343.5L516.0,351.2L491.0,358.7L465.0,366.8L440.0,374.4L415.0,383.5L392.0,391.5L392.0,391.5L415.0,383.5L440.0,374.4L465.0,366.8L490.9,358.3L515.7,350.2L541.0,341.8L564.2,333.4L591.1,324.7L611.1,320.4L624.8,316.6L631.2,315.0L639.3,311.3Z" fill="#25d6ea"/><ellipse cx="603" cy="326.2" rx="18" ry="3.6" transform="rotate(-13 603 326.2)" fill="#3edc3c"/><ellipse cx="603" cy="326.6" rx="16.5" ry="2.8" transform="rotate(-13 603 326.6)" fill="#f0e222"/><ellipse cx="603" cy="327" rx="15" ry="2.1" transform="rotate(-13 603 327)" fill="#e01b1b"/><ellipse cx="553" cy="338.4" rx="6" ry="1.1" transform="rotate(-17 553 338.4)" fill="#2a62e0"/></g><path d="M630.0,303.4C623.3,305.7 604.8,312.2 590.0,317.4C575.2,322.6 558.0,328.8 541.5,334.6C525.0,340.5 507.9,346.5 491.0,352.5C474.1,358.5 456.5,364.5 440.0,370.4C423.5,376.3 400.0,384.9 392.0,387.8" fill="none" stroke="#8c1212" stroke-width=".7" opacity=".7"/></g><path d="M636.0,297.5C635.0,298.2 634.3,299.8 630.0,301.6C625.7,303.5 616.7,306.2 610.0,308.6C603.3,311.0 597.5,313.1 590.0,315.8C582.5,318.5 573.1,321.8 565.0,324.7C556.9,327.6 549.7,330.1 541.5,333.0C533.3,335.9 524.4,339.0 516.0,342.0C507.6,345.0 499.5,348.0 491.0,351.0C482.5,354.0 473.5,357.2 465.0,360.2C456.5,363.2 448.3,366.0 440.0,369.0C431.7,372.0 423.0,375.1 415.0,378.0C407.0,380.9 396.8,384.6 392.0,386.5C387.2,388.4 386.0,388.7 386.0,389.5C386.0,390.3 387.2,392.5 392.0,391.5C396.8,390.5 407.0,386.4 415.0,383.5C423.0,380.6 431.7,377.2 440.0,374.4C448.3,371.6 456.5,369.4 465.0,366.8C473.5,364.2 482.5,361.3 491.0,358.7C499.5,356.1 507.6,353.7 516.0,351.2C524.4,348.7 533.3,346.0 541.5,343.5C549.7,341.0 556.6,338.7 565.0,336.2C573.4,333.7 584.2,330.4 592.0,328.5C599.8,326.6 606.3,325.8 612.0,324.5C617.7,323.2 622.4,322.0 626.0,321.0C629.6,320.0 631.2,320.0 633.5,318.5C635.8,317.0 638.9,313.1 640.0,312.0Z" fill="none" stroke="#3c3c3c" stroke-width=".55" opacity=".8"/><path d="M628.0,301.2C621.7,303.5 604.4,309.8 590.0,314.9C575.6,320.0 558.0,326.2 541.5,332.1C525.0,338.0 507.9,344.0 491.0,350.0C474.1,356.0 455.2,362.6 440.0,368.0C424.8,373.4 406.7,380.1 400.0,382.5" fill="none" stroke="#555" stroke-width=".5" opacity=".75"/><path d="M629.5,272.0C629.9,270.8 630.7,267.8 631.6,265.0C632.5,262.2 633.4,258.5 634.8,255.0C636.2,251.5 638.1,247.7 640.0,244.0C641.9,240.3 644.1,238.3 646.4,233.0C648.7,227.7 651.5,219.0 653.8,212.0C656.1,205.0 658.0,198.0 660.0,191.0C662.0,184.0 663.4,176.8 665.5,170.0C667.6,163.2 670.1,157.2 672.5,150.0C674.9,142.8 678.0,133.2 680.0,126.5C682.0,119.8 683.4,114.3 684.5,110.0C685.6,105.7 685.8,102.6 686.5,100.5C687.2,98.4 687.8,97.2 688.6,97.2C689.4,97.2 691.1,98.4 691.3,100.5C691.5,102.6 690.7,105.7 690.0,110.0C689.3,114.3 688.2,119.8 687.0,126.5C685.8,133.2 684.4,142.8 683.0,150.0C681.6,157.2 680.0,163.2 678.8,170.0C677.6,176.8 677.0,184.0 676.0,191.0C675.0,198.0 674.2,205.0 672.9,212.0C671.6,219.0 669.6,227.3 668.2,233.0C666.8,238.7 665.7,241.8 664.5,246.0C663.3,250.2 661.9,254.7 661.0,258.0C660.1,261.3 660.8,263.2 659.0,266.0C657.2,268.8 651.5,273.5 650.0,275.0Z" fill="url(#gTop)"/><g clip-path="url(#cTop)"><g filter="url(#bl)"><path d="M629.5,272.0L631.6,265.0L634.8,255.0L640.0,244.0L646.4,233.0L653.8,212.0L660.0,191.0L665.5,170.0L672.5,150.0L680.0,126.5L684.5,110.0L686.4,110.5L682.5,127.2L674.6,150.7L667.6,170.6L662.6,191.7L657.6,213.2L652.1,235.5L646.7,247.5L643.6,258.5L641.6,268.1L640.0,275.2Z" fill="#f0e222"/><path d="M629.5,272.0L631.6,265.0L634.8,255.0L640.0,244.0L646.4,233.0L653.8,212.0L660.0,191.0L665.5,170.0L672.5,150.0L680.0,126.5L684.5,110.0L686.0,110.4L681.9,127.1L674.1,150.5L667.1,170.5L662.0,191.6L656.8,213.0L650.8,234.9L645.2,246.8L641.7,257.8L639.4,267.4L637.7,274.5Z" fill="#3edc3c"/><path d="M629.5,272.0L631.6,265.0L634.8,255.0L640.0,244.0L646.4,233.0L653.8,212.0L660.0,191.0L665.5,170.0L665.7,170.1L660.9,191.2L655.9,212.7L649.6,234.4L643.8,246.0L639.7,257.0L637.2,266.8L635.4,273.8Z" fill="#25d6ea"/><path d="M629.5,272.0L631.6,265.0L634.8,255.0L640.0,244.0L646.4,233.0L653.8,212.0L660.0,191.0L660.3,191.1L654.6,212.2L647.5,233.5L641.3,244.7L636.5,255.7L633.5,265.6L631.4,272.6Z" fill="#e9eef0"/></g><path d="M655.0,266.0C655.5,264.3 656.9,259.7 658.0,256.0C659.1,252.3 660.4,247.8 661.5,244.0C662.6,240.2 663.4,238.3 664.5,233.0C665.6,227.7 667.0,219.0 668.0,212.0C669.0,205.0 669.7,198.0 670.6,191.0C671.5,184.0 672.2,176.8 673.6,170.0C675.0,163.2 677.1,157.2 679.0,150.0C680.9,142.8 684.0,130.4 685.0,126.5" fill="none" stroke="#8c1212" stroke-width=".7" opacity=".75"/></g><path d="M629.5,272.0C629.9,270.8 630.7,267.8 631.6,265.0C632.5,262.2 633.4,258.5 634.8,255.0C636.2,251.5 638.1,247.7 640.0,244.0C641.9,240.3 644.1,238.3 646.4,233.0C648.7,227.7 651.5,219.0 653.8,212.0C656.1,205.0 658.0,198.0 660.0,191.0C662.0,184.0 663.4,176.8 665.5,170.0C667.6,163.2 670.1,157.2 672.5,150.0C674.9,142.8 678.0,133.2 680.0,126.5C682.0,119.8 683.4,114.3 684.5,110.0C685.6,105.7 685.8,102.6 686.5,100.5C687.2,98.4 687.8,97.2 688.6,97.2C689.4,97.2 691.1,98.4 691.3,100.5C691.5,102.6 690.7,105.7 690.0,110.0C689.3,114.3 688.2,119.8 687.0,126.5C685.8,133.2 684.4,142.8 683.0,150.0C681.6,157.2 680.0,163.2 678.8,170.0C677.6,176.8 677.0,184.0 676.0,191.0C675.0,198.0 674.2,205.0 672.9,212.0C671.6,219.0 669.6,227.3 668.2,233.0C666.8,238.7 665.7,241.8 664.5,246.0C663.3,250.2 661.9,254.7 661.0,258.0C660.1,261.3 660.8,263.2 659.0,266.0C657.2,268.8 651.5,273.5 650.0,275.0Z" fill="none" stroke="#3c3c3c" stroke-width=".55" opacity=".8"/><path d="M685.6,143.0C686.0,141.5 687.4,137.2 688.2,134.0C689.0,130.8 689.9,128.0 690.6,124.0C691.3,120.0 691.9,113.9 692.3,110.0C692.7,106.1 693.1,102.6 693.1,100.5C693.1,98.4 692.6,98.2 692.0,97.6C691.4,97.0 690.0,96.9 689.6,96.8" fill="none" stroke="#555" stroke-width=".5" opacity=".8"/><g filter="url(#bl)"><path d="M629,300L637,297L641,304L637,311L633,318L628,318Z" fill="#e01b1b"/><path d="M636,309L644,307.5L640,313.5L634,317Z" fill="#2ad2e6"/></g><path d="M647,253.6C656,254.5 668,270 671.8,288C674.5,301 668,313 655.5,318.6C649,321 642,320 637,316C630.5,310 628,301 629.3,289C631,271 639,253.5 647,253.6Z" fill="url(#gHub)"/><clipPath id="cHub"><path d="M647,253.6C656,254.5 668,270 671.8,288C674.5,301 668,313 655.5,318.6C649,321 642,320 637,316C630.5,310 628,301 629.3,289C631,271 639,253.5 647,253.6Z"/></clipPath><g clip-path="url(#cHub)"><g filter="url(#bl2)"><ellipse cx="663" cy="284" rx="3" ry="7.5" fill="#38a8e8" opacity=".85" transform="rotate(-28 663 284)"/><ellipse cx="658" cy="310" rx="7" ry="5" fill="#30b8e0" opacity=".8"/><ellipse cx="635.5" cy="296" rx="3.5" ry="5.5" fill="#38a0e6" opacity=".8"/><ellipse cx="642" cy="302" rx="4.5" ry="3" fill="#38b0e6" opacity=".7"/><ellipse cx="641" cy="311.5" rx="5" ry="3.5" fill="#38a8e6" opacity=".65"/><ellipse cx="654" cy="262" rx="5" ry="4" fill="#3a6ef0" opacity=".6"/></g><g filter="url(#bl)"><ellipse cx="664" cy="302.5" rx="9.2" ry="11" fill="#30c8d8" transform="rotate(24 664 302.5)"/><ellipse cx="664" cy="302.5" rx="8" ry="9.8" fill="#38d848" transform="rotate(24 664 302.5)"/><ellipse cx="664.3" cy="302.5" rx="6.9" ry="8.7" fill="#f0e020" transform="rotate(24 664.3 302.5)"/><ellipse cx="664.8" cy="302.5" rx="5.8" ry="7.6" fill="#e01b1b" transform="rotate(24 664.8 302.5)"/></g></g><path d="M645.6,254C644.4,272 645,298 648,319.6" fill="none" stroke="#0c1f66" stroke-width=".7" opacity=".85"/><path d="M650.4,256.5C658,262 666,274 669.6,288" fill="none" stroke="#0c1f66" stroke-width=".6" opacity=".55"/><path d="M640,256.5Q647,252 654,256" fill="none" stroke="#0c1f66" stroke-width=".6" opacity=".7"/><path d="M669.0,291.5C670.0,291.7 673.0,292.1 675.0,292.5C677.0,292.9 679.3,294.3 681.0,294.0C682.7,293.7 683.6,291.7 685.0,290.5C686.4,289.3 687.3,287.0 689.3,287.0C691.3,287.0 694.3,288.7 697.0,290.3C699.7,291.9 702.8,294.2 705.7,296.6C708.6,299.0 711.9,302.5 714.6,304.9C717.4,307.3 717.3,308.0 722.2,311.2C727.1,314.4 738.3,320.8 743.8,323.9C749.3,327.0 748.0,325.9 755.2,329.8C762.4,333.7 776.3,341.2 786.8,347.0C797.3,352.8 807.5,358.7 818.0,364.5C828.5,370.3 842.3,377.9 850.0,382.0C857.7,386.1 860.2,386.9 864.0,388.8C867.8,390.7 871.3,391.9 872.6,393.2C873.9,394.5 872.9,395.6 871.8,396.5C870.7,397.4 869.6,399.4 866.0,398.6C862.4,397.8 858.0,395.5 850.0,391.8C842.0,388.1 828.5,381.6 818.0,376.5C807.5,371.4 797.5,366.5 787.0,361.5C776.5,356.5 765.7,351.6 755.0,346.5C744.3,341.4 732.2,335.6 723.0,331.0C713.8,326.4 707.2,322.8 700.0,319.0C692.8,315.2 685.3,310.9 680.0,308.0C674.7,305.1 670.7,303.2 668.0,301.5C665.3,299.8 664.7,298.6 664.0,298.0Z" fill="url(#gRight)"/><g clip-path="url(#cRight)"><g filter="url(#bl)"><path d="M681.0,294.0L685.0,290.5L689.3,287.0L697.0,290.3L705.7,296.6L714.6,304.9L722.2,311.2L743.8,323.9L755.2,329.8L786.8,347.0L818.0,364.5L817.9,364.8L785.9,348.6L753.4,333.1L741.7,327.6L718.9,316.2L709.6,310.5L699.6,303.9L691.4,299.8L689.5,298.5L690.2,296.6L683.0,296.3Z" fill="#f0e222"/><path d="M681.0,294.0L685.0,290.5L689.3,287.0L697.0,290.3L705.7,296.6L714.6,304.9L722.2,311.2L743.8,323.9L755.2,329.8L786.8,347.0L818.0,364.5L817.9,364.7L786.2,348.1L753.9,332.2L742.3,326.5L719.8,314.8L711.0,308.9L701.3,301.9L693.0,297.1L689.4,295.3L688.7,294.9L682.4,295.6Z" fill="#3edc3c"/><path d="M681.0,294.0L685.0,290.5L689.3,287.0L697.0,290.3L705.7,296.6L714.6,304.9L722.2,311.2L743.8,323.9L755.2,329.8L786.8,347.0L818.0,364.5L817.9,364.6L786.4,347.7L754.4,331.3L742.9,325.5L720.7,313.5L712.4,307.4L703.0,299.9L694.5,294.6L689.4,292.2L687.3,293.3L681.9,295.0Z" fill="#25d6ea"/><ellipse cx="703.5" cy="296.5" rx="3.2" ry="1.5" transform="rotate(38 703.5 296.5)" fill="#e01b1b"/><path d="M670,291L681,294.6L677,297L669,296Z" fill="#e01b1b"/><path d="M689.5,288L694,290L692,296L688,293Z" fill="#3edc3c"/></g><path d="M668.0,300.0C673.3,302.8 690.8,311.8 700.0,316.5C709.2,321.2 713.8,323.7 723.0,328.2C732.2,332.7 744.3,338.5 755.0,343.6C765.7,348.7 776.5,353.7 787.0,358.8C797.5,363.9 807.5,368.9 818.0,374.0C828.5,379.1 841.8,385.8 850.0,389.6C858.2,393.4 864.2,395.8 867.0,397.0" fill="none" stroke="#8c1212" stroke-width=".7" opacity=".7"/></g><path d="M669.0,291.5C670.0,291.7 673.0,292.1 675.0,292.5C677.0,292.9 679.3,294.3 681.0,294.0C682.7,293.7 683.6,291.7 685.0,290.5C686.4,289.3 687.3,287.0 689.3,287.0C691.3,287.0 694.3,288.7 697.0,290.3C699.7,291.9 702.8,294.2 705.7,296.6C708.6,299.0 711.9,302.5 714.6,304.9C717.4,307.3 717.3,308.0 722.2,311.2C727.1,314.4 738.3,320.8 743.8,323.9C749.3,327.0 748.0,325.9 755.2,329.8C762.4,333.7 776.3,341.2 786.8,347.0C797.3,352.8 807.5,358.7 818.0,364.5C828.5,370.3 842.3,377.9 850.0,382.0C857.7,386.1 860.2,386.9 864.0,388.8C867.8,390.7 871.3,391.9 872.6,393.2C873.9,394.5 872.9,395.6 871.8,396.5C870.7,397.4 869.6,399.4 866.0,398.6C862.4,397.8 858.0,395.5 850.0,391.8C842.0,388.1 828.5,381.6 818.0,376.5C807.5,371.4 797.5,366.5 787.0,361.5C776.5,356.5 765.7,351.6 755.0,346.5C744.3,341.4 732.2,335.6 723.0,331.0C713.8,326.4 707.2,322.8 700.0,319.0C692.8,315.2 685.3,310.9 680.0,308.0C674.7,305.1 670.7,303.2 668.0,301.5C665.3,299.8 664.7,298.6 664.0,298.0Z" fill="none" stroke="#3c3c3c" stroke-width=".55" opacity=".8"/><path d="M688.0,285.8C688.4,285.8 688.8,284.9 690.5,285.6C692.2,286.3 695.3,288.3 698.0,290.0C700.7,291.7 703.6,293.3 706.5,295.6C709.4,297.9 712.6,301.5 715.4,303.9C718.1,306.3 718.1,307.0 723.0,310.2C727.9,313.4 733.8,316.9 744.6,322.9C755.4,328.9 773.4,338.2 787.6,346.0C801.8,353.8 822.9,365.7 830.0,369.6" fill="none" stroke="#555" stroke-width=".5" opacity=".75"/><path d="M845.0,391.5C847.2,392.5 854.5,396.0 858.0,397.5C861.5,399.0 864.2,400.2 866.0,400.5C867.8,400.8 868.5,399.7 869.0,399.5" fill="none" stroke="#555" stroke-width=".5" opacity=".75"/>
<rect x="1002.9" y="54" width="56.3" height="4" fill="#f0f0f0" stroke="#bdbdbd" stroke-width=".4"/><rect x="1002.9" y="54" width="28" height="2" fill="#a6a6a6"/><rect x="1030.9" y="56" width="28.3" height="2" fill="#a6a6a6"/><path d="M1002.9,54V60.4M1030.9,54V60.4M1059.2,54V60.4" stroke="#c4c4c4" stroke-width=".4"/><text x="1002.2" y="63.2" font-size="4.6" fill="#bcbcbc" font-family="Liberation Sans, Noto Sans CJK TC, sans-serif">0</text><text x="1030.4" y="63.2" font-size="4.6" fill="#bcbcbc" font-family="Liberation Sans, Noto Sans CJK TC, sans-serif">1.66e+003</text><text x="1058.8" y="63.2" font-size="4.6" fill="#bcbcbc" font-family="Liberation Sans, Noto Sans CJK TC, sans-serif">3.33e+003</text><text x="1060.2" y="56.8" font-size="4.2" fill="#c4c4c4" font-family="Liberation Sans, Noto Sans CJK TC, sans-serif">mm</text><polygon points="1017.2,81.7 1046,82.7 1050.2,102.3 1046,123.6 1015,123 1012,102.3" fill="#8aa2c6"/><polygon points="1017.2,81.7 1046,82.7 1041.3,103 1012,102.3" fill="#7f9fcc"/><polygon points="1012,102.3 1041.3,103 1046,123.6 1015,123" fill="#8797b2"/><polygon points="1046,82.7 1050.2,102.3 1046,123.6 1041.3,103" fill="#9fb6d6"/><path d="M1017.2,81.7L1020.6,102.3L1015,123M1020.6,102.3L1050.2,102.3" stroke="#7488a8" stroke-width=".5" fill="none" opacity=".6"/><path d="M1017.2,81.7L1046,82.7L1050.2,102.3" stroke="#6f7f96" stroke-width=".5" fill="none" opacity=".7"/><text transform="translate(1031.6,99.6) rotate(-80)" font-size="4.6" fill="#e4ecf6" font-family="Liberation Sans, Noto Sans CJK TC, sans-serif">FRONT</text><text transform="translate(1033,120.6) rotate(-80)" font-size="4.6" fill="#c4cede" font-family="Liberation Sans, Noto Sans CJK TC, sans-serif">FRONT</text><path d="M1015,123.4H1046" stroke="#2a86e0" stroke-width="1.2"/><path d="M1045.2,122.6L1041.6,103.2" stroke="#a03058" stroke-width="1.1"/><path d="M1046.4,123L1049.8,103" stroke="#38c040" stroke-width="1"/><rect x="1041" y="119.8" width="3" height="3" fill="none" stroke="#5a6ab0" stroke-width=".6"/><text x="1041.4" y="101.2" font-size="9" fill="#8e2a4c" font-family="Liberation Sans, Noto Sans CJK TC, sans-serif">X</text><text x="1050" y="101.2" font-size="9" fill="#4cc44c" font-family="Liberation Sans, Noto Sans CJK TC, sans-serif">Y</text><text x="1012.6" y="123.8" font-size="8.6" fill="#2a80e0" font-family="Liberation Sans, Noto Sans CJK TC, sans-serif">Z</text><text x="984.6" y="146.8" font-size="4.2" fill="#d2d2d2" textLength="15.2" lengthAdjust="spacingAndGlyphs" font-family="Liberation Sans, Noto Sans CJK TC, sans-serif">MIDAS</text><text x="984.4" y="157.2" font-size="12" fill="#d6d6d6" textLength="29.6" lengthAdjust="spacingAndGlyphs" font-family="Liberation Sans, Noto Sans CJK TC, sans-serif">MESH</text><text x="1015.6" y="157.2" font-size="12" font-weight="bold" fill="#c4c4c4" textLength="27.6" lengthAdjust="spacingAndGlyphs" font-family="Liberation Sans, Noto Sans CJK TC, sans-serif">FREE</text><text x="1046.8" y="157.2" font-size="12" font-weight="bold" fill="#c4c4c4" textLength="25.6" lengthAdjust="spacingAndGlyphs" font-family="Liberation Sans, Noto Sans CJK TC, sans-serif">2021</text><text x="990.8" y="246.4" font-size="6" font-weight="bold" fill="#111" font-family="Liberation Sans, Noto Sans CJK TC, sans-serif">Stress</text><path d="M990.8,248.6H1050.4" stroke="#444" stroke-width=".6"/><text x="990.8" y="254" font-size="4.7" fill="#333" textLength="43.4" lengthAdjust="spacingAndGlyphs" font-family="Liberation Sans, Noto Sans CJK TC, sans-serif">STRESS VON MISES</text><rect x="991.4" y="260.30" width="6.6" height="12.10" fill="#f21c1c"/><rect x="991.4" y="272.30" width="6.6" height="12.10" fill="#fb8a1e"/><rect x="991.4" y="284.30" width="6.6" height="12.10" fill="#fdd31e"/><rect x="991.4" y="296.30" width="6.6" height="12.10" fill="#fdfb20"/><rect x="991.4" y="308.30" width="6.6" height="12.10" fill="#cbf520"/><rect x="991.4" y="320.30" width="6.6" height="12.10" fill="#6cf22a"/><rect x="991.4" y="332.30" width="6.6" height="12.10" fill="#22ea3c"/><rect x="991.4" y="344.30" width="6.6" height="12.10" fill="#22f0a0"/><rect x="991.4" y="356.30" width="6.6" height="12.10" fill="#22f2ee"/><rect x="991.4" y="368.30" width="6.6" height="12.10" fill="#22f2ff"/><rect x="991.4" y="380.30" width="6.6" height="12.10" fill="#22b0fa"/><rect x="991.4" y="392.30" width="6.6" height="12.10" fill="#2250f6"/><path d="M991.4,260.30H1013" stroke="#d9a0a0" stroke-width=".35"/><text x="1011.8" y="262.10" font-size="5.2" fill="#222" textLength="37.6" lengthAdjust="spacingAndGlyphs" font-family="Liberation Sans, Noto Sans CJK TC, sans-serif">+2.00000e+002</text><path d="M991.4,272.30H1013" stroke="#d9a0a0" stroke-width=".35"/><text x="1011.8" y="274.10" font-size="5.2" fill="#222" textLength="37.6" lengthAdjust="spacingAndGlyphs" font-family="Liberation Sans, Noto Sans CJK TC, sans-serif">+1.83334e+002</text><path d="M991.4,284.30H1013" stroke="#d9a0a0" stroke-width=".35"/><text x="1011.8" y="286.10" font-size="5.2" fill="#222" textLength="37.6" lengthAdjust="spacingAndGlyphs" font-family="Liberation Sans, Noto Sans CJK TC, sans-serif">+1.66668e+002</text><path d="M991.4,296.30H1013" stroke="#d9a0a0" stroke-width=".35"/><text x="1011.8" y="298.10" font-size="5.2" fill="#222" textLength="37.6" lengthAdjust="spacingAndGlyphs" font-family="Liberation Sans, Noto Sans CJK TC, sans-serif">+1.50002e+002</text><path d="M991.4,308.30H1013" stroke="#d9a0a0" stroke-width=".35"/><text x="1011.8" y="310.10" font-size="5.2" fill="#222" textLength="37.6" lengthAdjust="spacingAndGlyphs" font-family="Liberation Sans, Noto Sans CJK TC, sans-serif">+1.33336e+002</text><path d="M991.4,320.30H1013" stroke="#d9a0a0" stroke-width=".35"/><text x="1011.8" y="322.10" font-size="5.2" fill="#222" textLength="37.6" lengthAdjust="spacingAndGlyphs" font-family="Liberation Sans, Noto Sans CJK TC, sans-serif">+1.16670e+002</text><path d="M991.4,332.30H1013" stroke="#d9a0a0" stroke-width=".35"/><text x="1011.8" y="334.10" font-size="5.2" fill="#222" textLength="37.6" lengthAdjust="spacingAndGlyphs" font-family="Liberation Sans, Noto Sans CJK TC, sans-serif">+1.00005e+002</text><path d="M991.4,344.30H1013" stroke="#d9a0a0" stroke-width=".35"/><text x="1011.8" y="346.10" font-size="5.2" fill="#222" textLength="37.6" lengthAdjust="spacingAndGlyphs" font-family="Liberation Sans, Noto Sans CJK TC, sans-serif">+8.33387e+001</text><path d="M991.4,356.30H1013" stroke="#d9a0a0" stroke-width=".35"/><text x="1011.8" y="358.10" font-size="5.2" fill="#222" textLength="37.6" lengthAdjust="spacingAndGlyphs" font-family="Liberation Sans, Noto Sans CJK TC, sans-serif">+6.66728e+001</text><path d="M991.4,368.30H1013" stroke="#d9a0a0" stroke-width=".35"/><text x="1011.8" y="370.10" font-size="5.2" fill="#222" textLength="37.6" lengthAdjust="spacingAndGlyphs" font-family="Liberation Sans, Noto Sans CJK TC, sans-serif">+5.00069e+001</text><path d="M991.4,380.30H1013" stroke="#d9a0a0" stroke-width=".35"/><text x="1011.8" y="382.10" font-size="5.2" fill="#222" textLength="37.6" lengthAdjust="spacingAndGlyphs" font-family="Liberation Sans, Noto Sans CJK TC, sans-serif">+3.33410e+001</text><path d="M991.4,392.30H1013" stroke="#d9a0a0" stroke-width=".35"/><text x="1011.8" y="394.10" font-size="5.2" fill="#222" textLength="37.6" lengthAdjust="spacingAndGlyphs" font-family="Liberation Sans, Noto Sans CJK TC, sans-serif">+1.66751e+001</text><path d="M991.4,404.30H1013" stroke="#d9a0a0" stroke-width=".35"/><text x="1011.8" y="406.10" font-size="5.2" fill="#222" textLength="37.6" lengthAdjust="spacingAndGlyphs" font-family="Liberation Sans, Noto Sans CJK TC, sans-serif">+9.15432e-003</text><path d="M991.4,272.30H998" stroke="#333" stroke-width=".4" opacity=".45"/><path d="M991.4,284.30H998" stroke="#333" stroke-width=".4" opacity=".45"/><path d="M991.4,296.30H998" stroke="#333" stroke-width=".4" opacity=".45"/><path d="M991.4,308.30H998" stroke="#333" stroke-width=".4" opacity=".45"/><path d="M991.4,320.30H998" stroke="#333" stroke-width=".4" opacity=".45"/><path d="M991.4,332.30H998" stroke="#333" stroke-width=".4" opacity=".45"/><path d="M991.4,344.30H998" stroke="#333" stroke-width=".4" opacity=".45"/><path d="M991.4,356.30H998" stroke="#333" stroke-width=".4" opacity=".45"/><path d="M991.4,368.30H998" stroke="#333" stroke-width=".4" opacity=".45"/><path d="M991.4,380.30H998" stroke="#333" stroke-width=".4" opacity=".45"/><path d="M991.4,392.30H998" stroke="#333" stroke-width=".4" opacity=".45"/><text x="999.6" y="268.60" font-size="5.4" fill="#a82424" font-family="Liberation Sans, Noto Sans CJK TC, sans-serif">25.2%</text><text x="999.6" y="280.60" font-size="5.4" fill="#a82424" font-family="Liberation Sans, Noto Sans CJK TC, sans-serif">1.4%</text><text x="999.6" y="292.60" font-size="5.4" fill="#a82424" font-family="Liberation Sans, Noto Sans CJK TC, sans-serif">1.7%</text><text x="999.6" y="304.60" font-size="5.4" fill="#a82424" font-family="Liberation Sans, Noto Sans CJK TC, sans-serif">1.8%</text><text x="999.6" y="316.60" font-size="5.4" fill="#a82424" font-family="Liberation Sans, Noto Sans CJK TC, sans-serif">2.1%</text><text x="999.6" y="328.60" font-size="5.4" fill="#a82424" font-family="Liberation Sans, Noto Sans CJK TC, sans-serif">2.3%</text><text x="999.6" y="340.60" font-size="5.4" fill="#a82424" font-family="Liberation Sans, Noto Sans CJK TC, sans-serif">2.3%</text><text x="999.6" y="352.60" font-size="5.4" fill="#a82424" font-family="Liberation Sans, Noto Sans CJK TC, sans-serif">2.9%</text><text x="999.6" y="364.60" font-size="5.4" fill="#a82424" font-family="Liberation Sans, Noto Sans CJK TC, sans-serif">3.2%</text><text x="999.6" y="376.60" font-size="5.4" fill="#a82424" font-family="Liberation Sans, Noto Sans CJK TC, sans-serif">21.7%</text><text x="999.6" y="388.60" font-size="5.4" fill="#a82424" font-family="Liberation Sans, Noto Sans CJK TC, sans-serif">17.2%</text><text x="999.6" y="400.60" font-size="5.4" fill="#a82424" font-family="Liberation Sans, Noto Sans CJK TC, sans-serif">18.1%</text><text x="991" y="411.60" font-size="4.8" fill="#222" font-family="Liberation Sans, Noto Sans CJK TC, sans-serif">非線性分析-1</text><text x="991" y="417.90" font-size="4.8" fill="#222" font-family="Liberation Sans, Noto Sans CJK TC, sans-serif">子工況-1</text><text x="991" y="424.20" font-size="4.8" fill="#222" font-family="Liberation Sans, Noto Sans CJK TC, sans-serif">INCR=9 (LOAD=0.900)</text><text x="991" y="430.50" font-size="4.8" fill="#222" font-family="Liberation Sans, Noto Sans CJK TC, sans-serif">Unit : N/mm²</text>
</svg>
<div id="log"><div style="position:absolute;left:0;top:-.1px"><div>ECTING LOAD INCREMENT (BISECT LEVEL=5)</div><div>ATION= 27, ERROR NORMS: F(&nbsp; 4.05E-04/&nbsp; 1.0E-03)&nbsp; W(&nbsp; 2.09E-11/&nbsp; 1.0E-06)&nbsp; CONVERGED</div><div>ATION= 49, ERROR NORMS: F(&nbsp; 1.14E-01/&nbsp; 1.0E-03)&nbsp; W(&nbsp; 1.45E-07/&nbsp; 1.0E-06)</div><div>NVERGE IN NONLINEAR ANALYSIS. LOAD INCREMENT=11.</div><div>ATION= 16, ERROR NORMS: F(&nbsp; 8.47E-04/&nbsp; 1.0E-03)&nbsp; W(&nbsp; 7.32E-11/&nbsp; 1.0E-06)&nbsp; CONVERGED</div><div>ATION= 20, ERROR NORMS: F(&nbsp; 1.91E-02/&nbsp; 1.0E-03)&nbsp; W(&nbsp; 1.31E-09/&nbsp; 1.0E-06)</div><div>ECTING LOAD INCREMENT (BISECT LEVEL=4)</div><div>ATION= 20, ERROR NORMS: F(&nbsp; 2.17E-03/&nbsp; 1.0E-03)&nbsp; W(&nbsp; 1.90E-09/&nbsp; 1.0E-06)</div><div>ECTING LOAD INCREMENT (BISECT LEVEL=5)</div><div>ATION= 49, ERROR NORMS: F(&nbsp; 2.14E-03/&nbsp; 1.0E-03)&nbsp; W(&nbsp; 9.29E-10/&nbsp; 1.0E-06)</div><div>NVERGE IN NONLINEAR ANALYSIS. LOAD INCREMENT=13.</div><div>ATION=&nbsp; 6, ERROR NORMS: F(&nbsp; 2.48E-03/&nbsp; 1.0E-03)&nbsp; W(&nbsp; 3.80E-09/&nbsp; 1.0E-06)</div></div></div>
<div class="abs" style="left:232px;top:375px;width:6px;height:89.5px;background:rgba(60,60,60,.35)"></div>
<div class="abs" style="left:0;top:464.5px;width:801px;height:8.5px;background:#1c1c1c"></div>
<div class="abs" style="left:0;top:464.5px;width:231px;height:8.5px;background:#3d3d3d;overflow:hidden"><div class="logl" style="position:absolute;left:0;top:.2px">NVERGE IN NONLINEAR ANALYSIS. LOAD INCREMENT=13.</div></div>
<svg class="abs" style="left:225.6px;top:466.4px" width="5" height="4" viewBox="0 0 5 4"><path d="M0,3.4L2.5,.4L5,3.4Z" fill="#eee"/></svg>
<div class="abs" style="left:628.5px;top:469.4px;font-size:4.6px;line-height:6px;color:#e6e6e6;white-space:nowrap">0.0000, 0.0000, 0.0000</div>
<div class="abs" style="left:722.0px;top:468.4px;width:25.4px;height:6px;background:#f4f4f4;font-size:4.4px;line-height:6px;color:#333;padding-left:4px">N</div>
<div class="abs" style="left:741.4px;top:469px;width:5px;height:5px;background:#555"></div>
<div class="abs" style="left:749.0px;top:468.4px;width:25.4px;height:6px;background:#f4f4f4;font-size:4.4px;line-height:6px;color:#333;padding-left:4px">mm</div>
<div class="abs" style="left:768.4px;top:469px;width:5px;height:5px;background:#555"></div>
<div class="abs" style="left:776.0px;top:468.4px;width:25.0px;height:6px;background:#f4f4f4;font-size:4.4px;line-height:6px;color:#333;padding-left:4px">J</div>
<div class="abs" style="left:795.0px;top:469px;width:5px;height:5px;background:#555"></div>
<svg class="abs" style="left:794.0px;top:457px" width="4" height="5" viewBox="0 0 4 5"><path d="M.5,.3L3.4,2.5L.5,4.7Z" fill="#9aa"/></svg>
<svg class="abs" style="left:641.0px;top:398px" width="160" height="66" viewBox="920 398 160 66">
<defs><radialGradient id="wmr" cx=".6" cy=".25" r=".9"><stop offset="0" stop-color="#ee4a14"/><stop offset=".55" stop-color="#dc3414"/><stop offset="1" stop-color="#b8221a"/></radialGradient>
<linearGradient id="wmg" x1=".3" y1="0" x2=".5" y2="1"><stop offset="0" stop-color="#fde86a"/><stop offset=".6" stop-color="#f9b92e"/><stop offset="1" stop-color="#f29a1c"/></linearGradient></defs>
<circle cx="945.6" cy="423" r="22.2" fill="url(#wmr)"/>
<path d="M934,417.5C934.5,411.5 940.5,408 946,409.2C949.5,406.8 956,407.8 958,412C962.5,413 964.5,418.5 962.5,422.5C964.5,428 960,434 953.5,436.5C947.5,439.5 940,440.5 933,438.5C939,438.5 944,436 947.5,431.5C941.5,433.5 933,429.5 933.2,422.5C933.2,420.5 933.5,419 934,417.5Z" fill="url(#wmg)"/>
<path d="M940.8,421C941.5,417.6 946,416.2 949,418.2C952,420.2 952,425 949.5,427.4C947,429.6 943,429 942,426.6C943.5,427.6 946.4,427.2 947.4,425.2C948.4,423.2 947,420.8 944.8,420.6C943,420.4 941.6,421.4 940.8,421Z" fill="#dc3814"/>
<text x="973.6" y="431.8" font-size="31.6" font-weight="900" fill="#9a9a9a" fill-opacity=".92" letter-spacing="-.9" font-family="Liberation Sans, Noto Sans CJK SC, sans-serif">中金网</text>
<text x="975" y="445.6" font-size="9.6" fill="#a9a9a9" letter-spacing=".55" font-family="Liberation Sans, Noto Sans CJK SC, sans-serif">CNGOLD.COM.CN</text>
<text x="926.6" y="459" font-size="11" fill="#9e9e9e" letter-spacing="9.85" font-family="Liberation Sans, Noto Sans CJK SC, sans-serif">中文财经新媒体</text>
</svg>
</div>
</body></html>
